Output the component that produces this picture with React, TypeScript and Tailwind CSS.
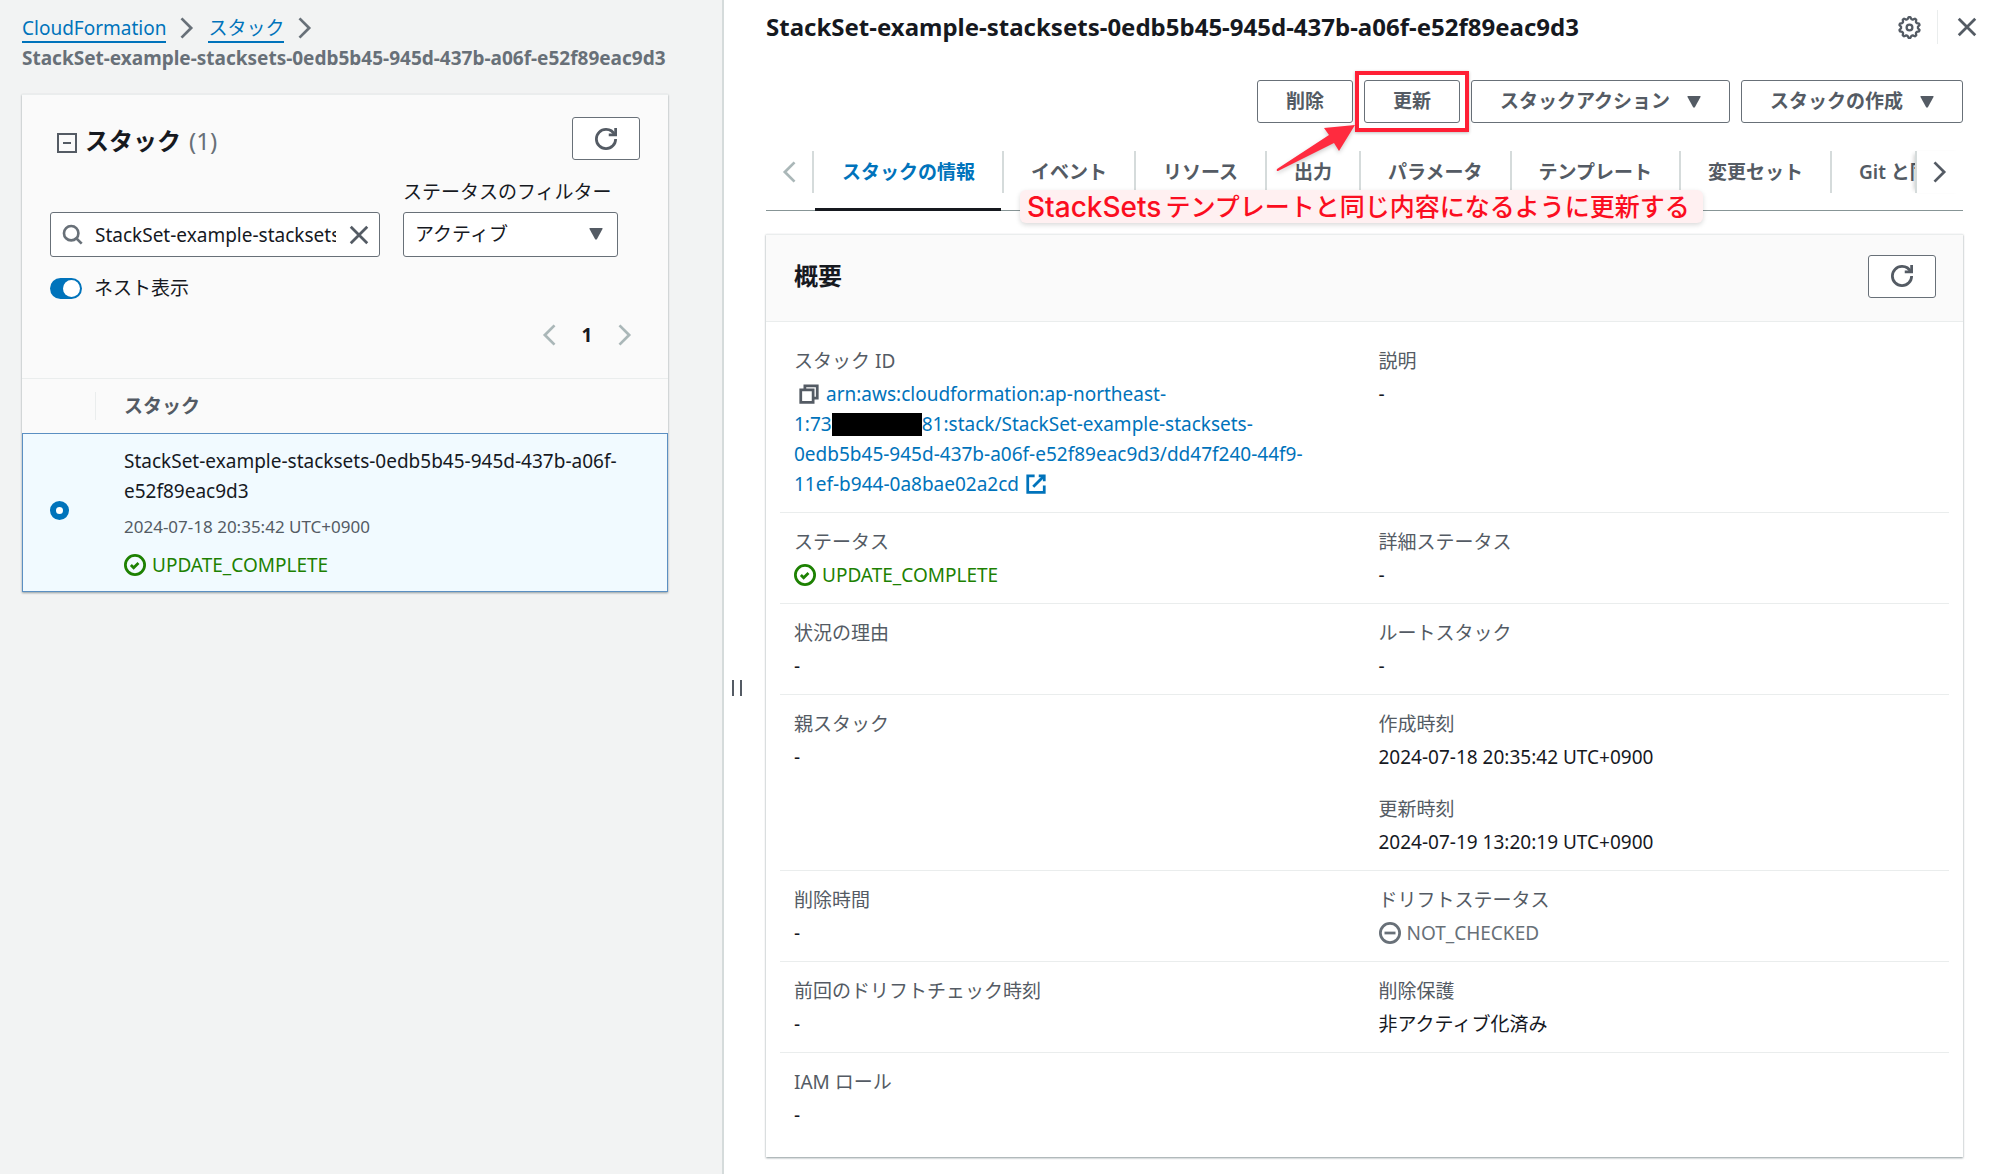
import type { ReactNode } from "react";

const STACK_NAME = "StackSet-example-stacksets-0edb5b45-945d-437b-a06f-e52f89eac9d3";

function Icon({ size = "size-[21px]", color = "", children }: { size?: string; color?: string; children: ReactNode }) {
  return (
    <svg viewBox="0 0 16 16" className={`${size} ${color} shrink-0`} fill="none" stroke="currentColor" strokeWidth="2" aria-hidden="true">
      {children}
    </svg>
  );
}

const Refresh = () => (
  <Icon size="size-[22px]" color="text-[#545b64]">
    <path d="M10 5h5V0" />
    <path d="M15 8a6.957 6.957 0 0 1-7 7 6.957 6.957 0 0 1-7-7 6.957 6.957 0 0 1 7-7 6.87 6.87 0 0 1 6.3 4" />
  </Icon>
);

const ChevronRight = ({ color = "text-[#687078]" }: { color?: string }) => (
  <Icon size="size-[22px]" color={color}>
    <path d="m4 1 7 7-7 7" />
  </Icon>
);

const ChevronLeft = ({ color = "text-[#aab7b8]" }: { color?: string }) => (
  <Icon size="size-[22px]" color={color}>
    <path d="m12 1-7 7 7 7" />
  </Icon>
);

const Close = ({ color = "text-[#545b64]" }: { color?: string }) => (
  <Icon size="size-[22px]" color={color}>
    <path d="m2 2 12 12M14 2 2 14" />
  </Icon>
);

const Caret = () => (
  <svg viewBox="0 0 14 12" className="h-3 w-3.5 shrink-0" fill="#545b64" aria-hidden="true">
    <path d="M1 0h12q1 0 .5 1L8 11q-1 1.500-2 0L.5 1Q0 0 1 0z" />
  </svg>
);

const TEETH = 10;
const gearPoints = Array.from({ length: TEETH * 4 }, (_, i) => {
  const angle = ((i - 0.5) / (TEETH * 4)) * Math.PI * 2 - Math.PI / 2;
  const r = i % 4 < 2 ? 7.2 : 5.9;
  return `${(8 + r * Math.cos(angle)).toFixed(2)},${(8 + r * Math.sin(angle)).toFixed(2)}`;
}).join(" ");

const Gear = () => (
  <svg viewBox="0 0 16 16" className="size-[23px]" fill="none" stroke="#545b64" strokeWidth="1.6" strokeLinejoin="round" aria-hidden="true">
    <polygon points={gearPoints} />
    <circle cx="8" cy="8" r="2" />
  </svg>
);

function UpdateComplete() {
  return (
    <span className="flex items-center gap-1.5 leading-[30px] text-[#1d8102]">
      <Icon size="size-[22px]">
        <circle cx="8" cy="8" r="7" />
        <path d="m5 8 2 2 3.521-3.521" />
      </Icon>
      UPDATE_COMPLETE
    </span>
  );
}

function Button({ children, caret }: { children: ReactNode; caret?: boolean }) {
  return (
    <button type="button" className="flex h-[43px] items-center gap-[17px] rounded-[3px] border border-[#687078] bg-white px-7 font-semibold text-[#545b64]">
      {children}
      {caret && <Caret />}
    </button>
  );
}

function RefreshButton() {
  return (
    <button type="button" aria-label="更新" className="flex h-[43px] w-[68px] items-center justify-center rounded-[3px] border border-[#687078] bg-white">
      <Refresh />
    </button>
  );
}

function Sidebar() {
  return (
    <aside className="w-[724px] shrink-0 border-r-2 border-[#d5dbdb] bg-[#f2f3f3] pt-3 pr-[54px] pl-[22px]">
      <nav aria-label="パンくずリスト">
        <ol className="flex flex-wrap items-center leading-[30px]">
          <li className="flex items-center">
            <a href="#" className="border-b-2 border-[#0073bb] pt-1 leading-[25px] text-[#0073bb]">CloudFormation</a>
            <span className="mx-2.5 flex"><ChevronRight /></span>
          </li>
          <li className="flex items-center">
            <a href="#" className="border-b-2 border-[#0073bb] pt-1 leading-[25px] text-[#0073bb]">スタック</a>
            <span className="mx-2.5 flex"><ChevronRight /></span>
          </li>
          <li className="font-bold whitespace-nowrap text-[#687078]">{STACK_NAME}</li>
        </ol>
      </nav>

      <section className="mt-[21px] border-t border-[#eaeded] bg-[#fafafa] shadow-[0_1px_2px_rgba(0,28,36,0.4)]">
        <div className="px-7 pt-[22px]">
          <div className="flex items-start justify-between">
            <h2 className="flex items-center pt-[9px] pl-[7px] text-2xl leading-[30px] font-bold text-[#16191f]">
              <button type="button" aria-label="折りたたむ" className="mr-2 flex pt-1">
                <svg viewBox="0 0 20 20" className="size-5" fill="none" stroke="#545b64" strokeWidth="2" aria-hidden="true">
                  <path d="M1 1h18v18H1z" />
                  <path d="M6 10h8" />
                </svg>
              </button>
              スタック
              <span className="ml-2 font-normal text-[#687078]">(1)</span>
            </h2>
            <RefreshButton />
          </div>

          <div className="mt-[17px] flex items-end gap-[23px]">
            <div className="flex h-[45px] w-[330px] items-center rounded-[3px] border border-[#687078] bg-white pr-[9px] pl-[11px]">
              <Icon color="text-[#687078]">
                <circle cx="7" cy="7" r="5.500" />
                <path d="m15 15-4.500-4.500" />
              </Icon>
              <input aria-label="スタックを検索" defaultValue="StackSet-example-stacksets" className="ml-3 w-[241px] bg-transparent pt-0.5 text-[#16191f] outline-none" />
              <button type="button" aria-label="クリア" className="ml-auto"><Close /></button>
            </div>
            <div className="w-[215px]">
              <label htmlFor="status-filter" className="block leading-[30px] whitespace-nowrap text-[#16191f]">ステータスのフィルター</label>
              <div className="relative mt-[5px]">
                <select id="status-filter" className="h-[45px] w-full appearance-none rounded-[3px] border border-[#687078] bg-white pl-[11px] text-[#16191f]">
                  <option>アクティブ</option>
                </select>
                <span className="pointer-events-none absolute top-4 right-[15px]"><Caret /></span>
              </div>
            </div>
          </div>

          <label className="mt-4 flex items-center gap-3 leading-[30px] text-[#16191f]">
            <input type="checkbox" role="switch" defaultChecked className="peer sr-only" />
            <span className="flex h-[21px] w-8 items-center justify-end rounded-full bg-[#0073bb] pr-0.5">
              <span className="size-[17px] rounded-full bg-white" />
            </span>
            ネスト表示
          </label>

          <div className="mt-[17px] flex items-center justify-end pr-1 pb-7 leading-[30px]">
            <button type="button" aria-label="前のページ"><ChevronLeft /></button>
            <button type="button" aria-current="page" className="w-[54px] text-center font-bold text-[#16191f]">1</button>
            <button type="button" aria-label="次のページ"><ChevronRight color="text-[#aab7b8]" /></button>
          </div>
        </div>

        <table className="w-full border-collapse text-left">
          <thead>
            <tr className="h-[54px] border-t border-[#eaeded]">
              <th className="w-[74px] p-0">
                <span className="block h-7 border-r border-[#eaeded]" />
              </th>
              <th className="pl-7 font-semibold text-[#545b64]">スタック</th>
            </tr>
          </thead>
          <tbody>
            <tr className="bg-[#f1faff] outline-1 -outline-offset-1 outline-[#5b8fc2]">
              <td className="pb-1 pl-7 align-middle">
                <input type="radio" name="stack" aria-label={STACK_NAME} defaultChecked className="block size-[19px] appearance-none rounded-full border-6 border-[#0073bb] bg-white" />
              </td>
              <td className="pt-[13px] pr-7 pb-3 pl-7 text-[#16191f]">
                <p className="leading-[30px]">StackSet-example-stacksets-0edb5b45-945d-437b-a06f-<br />e52f89eac9d3</p>
                <p className="mt-2 text-[17px] leading-[26px] text-[#545b64]">2024-07-18 20:35:42 UTC+0900</p>
                <div className="mt-2.5"><UpdateComplete /></div>
              </td>
            </tr>
          </tbody>
        </table>
      </section>
    </aside>
  );
}

const TABS = ["スタックの情報", "イベント", "リソース", "出力", "パラメータ", "テンプレート", "変更セット", "Git と同期"];

function Tabs() {
  return (
    <nav aria-label="タブ" className="relative mt-7 flex items-start border-b border-[#879596]">
      <button type="button" aria-label="前のタブ" className="flex h-[42px] w-12 shrink-0 items-center justify-center border-r-2 border-[#d5dbdb]">
        <ChevronLeft />
      </button>
      <div className="-mb-px ml-px flex w-0 grow overflow-hidden" role="tablist">
        {TABS.map((t, i) => (
          <div key={t} className="flex shrink-0 flex-col">
            <button
              type="button"
              role="tab"
              aria-selected={i === 0}
              className={`h-[42px] border-r-2 border-[#d5dbdb] px-[27px] font-semibold whitespace-nowrap ${i === 0 ? "text-[#0073bb]" : "text-[#545b64]"}`}
            >
              {t}
            </button>
            {i === 0 && <span className="mt-[15px] mr-[3px] h-[3px] bg-[#16191f]" />}
          </div>
        ))}
      </div>
      <button type="button" aria-label="次のタブ" className="flex h-[42px] w-12 shrink-0 items-center justify-center border-l-2 border-[#d5dbdb] shadow-[-4px_0_4px_-3px_rgba(0,0,0,0.2)]">
        <ChevronRight color="text-[#545b64]" />
      </button>
      <p className="absolute top-[39px] left-[254px] flex h-[33px] items-center gap-1 rounded-md bg-[#fff0f1] pr-[13px] pl-[7px] text-[25px] leading-none font-medium whitespace-nowrap text-[#fb0d20] shadow-[0_2px_5px_rgba(0,0,0,0.15)]">
        <span className="font-['Inter'] text-[28px]">StackSets</span>
        <span>テンプレートと同じ内容になるように更新する</span>
      </p>
    </nav>
  );
}

function Field({ label, children }: { label: string; children: ReactNode }) {
  return (
    <div>
      <dt className="leading-[30px] text-[#545b64]">{label}</dt>
      <dd className="mt-[3px] leading-[30px] text-[#16191f]">{children}</dd>
    </div>
  );
}

function Row({ left, right }: { left: ReactNode; right?: ReactNode }) {
  return (
    <div className="grid grid-cols-2 gap-7 border-b border-[#eaeded] px-3.5 pt-3.5 pb-[13px] last:border-b-0 last:pb-[27px]">
      <div>{left}</div>
      <div className="flex flex-col gap-[22px]">{right}</div>
    </div>
  );
}

function Overview() {
  return (
    <section className="mt-[23px] border-t border-[#eaeded] bg-white shadow-[0_1px_2px_rgba(0,28,36,0.45)]">
      <header className="flex h-[87px] items-center justify-between border-b border-[#eaeded] bg-[#fafafa] pr-[27px] pb-1 pl-7">
        <h2 className="text-2xl font-bold text-[#16191f]">概要</h2>
        <RefreshButton />
      </header>
      <dl className="px-3.5 pt-2.5">
        <Row
          left={
            <Field label="スタック ID">
              <button type="button" aria-label="コピー" className="mr-1.5 ml-1 inline-block align-[-4px]">
                <Icon size="size-[22px]" color="text-[#545b64]">
                  <path d="M2 5h9v9H2z" />
                  <path d="M5 5V2h9v9h-3" />
                </Icon>
              </button>
              <a href="#" className="text-[#0073bb]">
                arn:aws:cloudformation:ap-northeast-<br />
                1:73<span className="inline-block h-[23px] w-[90px] bg-black align-[-5px]" />81:stack/StackSet-example-stacksets-<br />
                0edb5b45-945d-437b-a06f-e52f89eac9d3/dd47f240-44f9-<br />
                11ef-b944-0a8bae02a2cd
                <span className="ml-1.5 inline-block align-[-4px]">
                  <Icon size="size-[22px]">
                    <path d="M10 2h4v4" />
                    <path d="m6 10 8-8" />
                    <path d="M14 9.048V14H2V2h5" />
                  </Icon>
                </span>
              </a>
            </Field>
          }
          right={<Field label="説明">-</Field>}
        />
        <Row left={<Field label="ステータス"><UpdateComplete /></Field>} right={<Field label="詳細ステータス">-</Field>} />
        <Row left={<Field label="状況の理由">-</Field>} right={<Field label="ルートスタック">-</Field>} />
        <Row
          left={<Field label="親スタック">-</Field>}
          right={
            <>
              <Field label="作成時刻">2024-07-18 20:35:42 UTC+0900</Field>
              <Field label="更新時刻">2024-07-19 13:20:19 UTC+0900</Field>
            </>
          }
        />
        <Row
          left={<Field label="削除時間">-</Field>}
          right={
            <Field label="ドリフトステータス">
              <span className="flex items-center gap-1.5 text-[#687078]">
                <Icon size="size-[22px]">
                  <circle cx="8" cy="8" r="7" />
                  <path d="M4 8h8" />
                </Icon>
                NOT_CHECKED
              </span>
            </Field>
          }
        />
        <Row left={<Field label="前回のドリフトチェック時刻">-</Field>} right={<Field label="削除保護">非アクティブ化済み</Field>} />
        <Row left={<Field label="IAM ロール">-</Field>} />
      </dl>
    </section>
  );
}

export default function App() {
  return (
    <div lang="ja" className="flex min-h-screen bg-white font-['Noto_Sans','Noto_Sans_CJK_JP',sans-serif] text-[19px]">
      <Sidebar />
      <div className="flex w-[42px] shrink-0 flex-col pl-2">
        <div className="flex-[47]" />
        <button type="button" aria-label="サイズを変更" className="h-4 w-2.5 border-x-2 border-[#545b64]" />
        <div className="flex-[33]" />
      </div>
      <main className="min-w-0 grow pr-[37px]">
        <header className="-mr-[37px] flex items-center pt-2.5 pr-[22px]">
          <h1 className="grow text-2xl leading-[34px] font-bold text-[#16191f]">{STACK_NAME}</h1>
          <button type="button" aria-label="設定"><Gear /></button>
          <span className="mx-4 h-[34px] w-px bg-[#eaeded]" />
          <button type="button" aria-label="閉じる" className="ml-0.5"><Close /></button>
        </header>
        <div className="mt-9 flex justify-end gap-[11px]">
          <Button>削除</Button>
          <div className="relative">
            <Button>更新</Button>
            <span className="pointer-events-none absolute -inset-[9px] border-4 border-[#ff1f35] shadow-[0_1px_3px_rgba(0,0,0,0.25)]" />
            <svg viewBox="0 0 82 50" className="pointer-events-none absolute top-[43px] -left-[89px] z-10 h-[50px] w-[82px] drop-shadow-[0_2px_2px_rgba(0,0,0,0.2)]" fill="#ff2b3f" aria-hidden="true">
              <path d="M80 2 49 5l5 7L2 46q-1 2 1 2l56-28 5 8z" />
            </svg>
          </div>
          <Button caret>スタックアクション</Button>
          <Button caret>スタックの作成</Button>
        </div>
        <Tabs />
        <Overview />
      </main>
    </div>
  );
}
